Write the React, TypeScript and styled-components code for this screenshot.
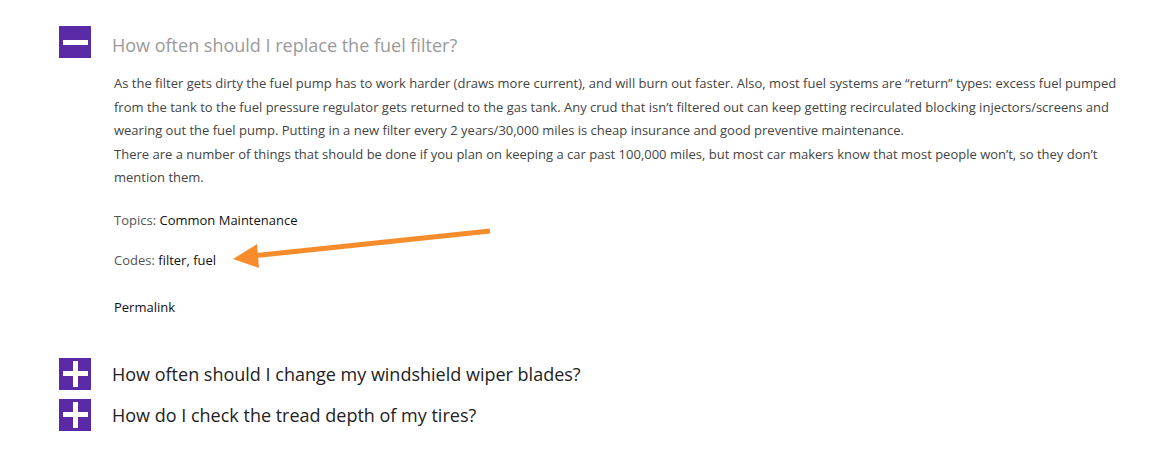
import React from "react";
import styled, { createGlobalStyle } from "styled-components";

const Global = createGlobalStyle`
  html, body { margin: 0; padding: 0; background: #fff; }
  body { font-family: "Open Sans", "Liberation Sans", sans-serif; }
`;

const Page = styled.div`
  position: relative;
  display: flex;
  flex-direction: column;
  gap: 9px;
  padding: 26px 0 0 59px;
  width: 1176px;
  height: 463px;
  box-sizing: border-box;
`;

const Item = styled.section<{ $open?: boolean }>`
  display: flex;
  flex-direction: column;
  padding-bottom: ${(p) => (p.$open ? "29px" : "0")};
`;

const Header = styled.div`
  display: flex;
  align-items: center;
  gap: 21px;
  height: 32px;
`;

const Toggle = styled.span<{ $open?: boolean }>`
  display: grid;
  place-items: center;
  width: 32px;
  height: 32px;
  flex: none;
  background: #5a2aa6;

  &::before {
    content: "";
    grid-area: 1 / 1;
    width: 25px;
    height: 5px;
    background: #fff;
  }

  &::after {
    content: "";
    grid-area: 1 / 1;
    width: 5px;
    height: 26px;
    background: #fff;
    display: ${(p) => (p.$open ? "none" : "block")};
  }
`;

const Question = styled.h3<{ $open?: boolean }>`
  margin: 0;
  padding-top: ${(p) => (p.$open ? "5px" : "0")};
  font-size: 18px;
  font-weight: 400;
  line-height: 32px;
  color: ${(p) => (p.$open ? "#9a9a9a" : "#222")};
`;

const Body = styled.div`
  display: flex;
  flex-direction: column;
  margin: 14px 0 0 55px;
  width: 1012px;
  font-size: 13px;
  line-height: 23.5px;
  color: #444;
`;

const Answer = styled.p`
  margin: 0;
`;

const Meta = styled.p<{ $gap: number }>`
  margin: ${(p) => p.$gap}px 0 0;
  color: #555;
`;

const Value = styled.span`
  color: #111;
`;

const Link = styled.a`
  color: #111;
  text-decoration: none;
`;

const Arrow = styled.svg`
  position: absolute;
  left: 0;
  top: 0;
  pointer-events: none;
`;

export default function App() {
  return (
    <>
      <Global />
      <Page>
        <Item $open>
          <Header>
            <Toggle $open />
            <Question $open>How often should I replace the fuel filter?</Question>
          </Header>
          <Body>
            <Answer>
              As the filter gets dirty the fuel pump has to work harder (draws more current), and will burn out faster. Also, most fuel systems are “return” types: excess fuel pumped from the tank to the fuel pressure regulator gets returned to the gas tank. Any crud that isn’t filtered out can keep getting recirculated blocking injectors/screens and wearing out the fuel pump. Putting in a new filter every 2 years/30,000 miles is cheap insurance and good preventive maintenance.
              <br />
              There are a number of things that should be done if you plan on keeping a car past 100,000 miles, but most car makers know that most people won’t, so they don’t mention them.
            </Answer>
            <Meta $gap={19.5}>
              Topics: <Value>Common Maintenance</Value>
            </Meta>
            <Meta $gap={16.5}>
              Codes: <Value>filter, fuel</Value>
            </Meta>
            <Meta $gap={23.5}>
              <Link href="#">Permalink</Link>
            </Meta>
          </Body>
        </Item>
        <Item>
          <Header>
            <Toggle />
            <Question>How often should I change my windshield wiper blades?</Question>
          </Header>
        </Item>
        <Item>
          <Header>
            <Toggle />
            <Question>How do I check the tread depth of my tires?</Question>
          </Header>
        </Item>
        <Arrow width="1176" height="463" viewBox="0 0 1176 463">
          <line x1="490" y1="231" x2="252" y2="256" stroke="#f78c2c" strokeWidth="5" />
          <polygon points="233,259 257,244 259,268" fill="#f78c2c" />
        </Arrow>
      </Page>
    </>
  );
}
